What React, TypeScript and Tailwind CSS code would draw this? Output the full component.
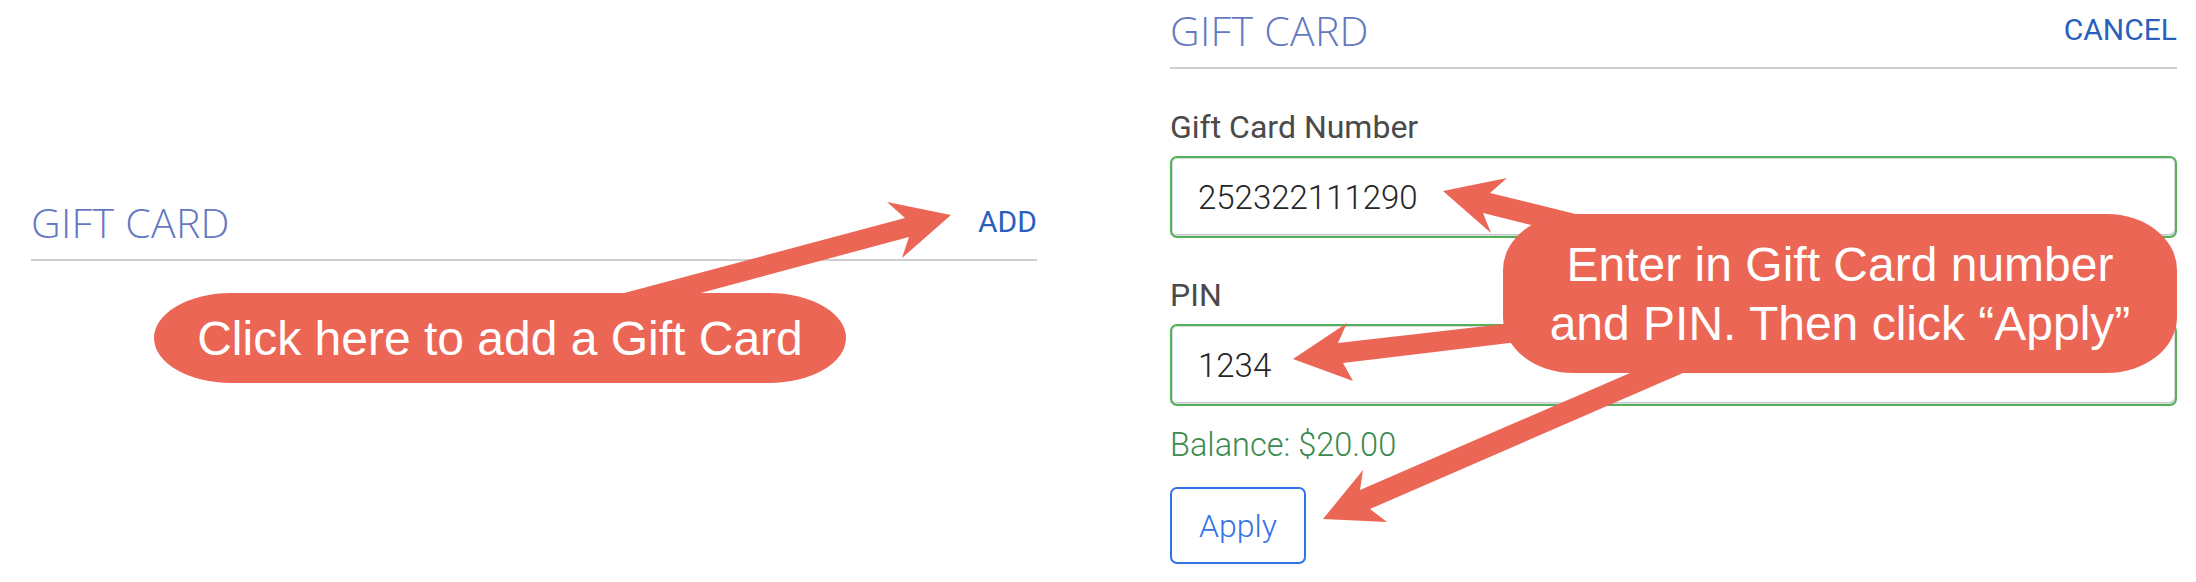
import type { ReactNode } from "react";

// annotation arrows, drawn over the form in page coordinates
const arrows = [
  "523,320 905,218 887,202 951,215 902,258 909,237 600,320",
  "1443,191 1507,178 1490,193 1620,225 1620,247 1483,213 1491,233",
  "1293,359 1347,323 1338,343 1600,313 1600,332 1343,363 1353,381",
  "1323,519 1363,470 1360,490 1683,350 1736,350 1370,509 1387,522",
];

export default function App() {
  return (
    <div className="relative h-[582px] w-[2196px] overflow-hidden bg-white font-[Roboto,sans-serif]">
      <div className="flex items-start">
        <section className="ml-[31px] w-[1006px] pt-[198px]">
          <SectionHeader action="ADD" />
        </section>

        <section className="ml-[133px] w-[1007px] pt-[6px]">
          <SectionHeader action="CANCEL" />

          <div className="mt-[38px] flex flex-col">
            <Field label="Gift Card Number" value="252322111290" />
            <div className="mt-[37px]">
              <Field label="PIN" value="1234" />
            </div>

            <div className="mt-[19px] text-[32.5px] leading-[40px] font-light text-[#3b8a4e]">Balance: $20.00</div>

            <button
              type="button"
              className="mt-[22px] flex h-[77px] w-[136px] items-center justify-center rounded-[7px] border-2 border-[#3174e6] text-[32px] leading-[40px] font-light text-[#3572e6]"
            >
              Apply
            </button>
          </div>
        </section>
      </div>

      <svg className="pointer-events-none absolute inset-0" width="2196" height="582" viewBox="0 0 2196 582">
        <g fill="#ec6656">
          {arrows.map((points) => (
            <polygon key={points} points={points} />
          ))}
        </g>
      </svg>

      <Callout className="left-[154px] top-[293px] h-[90px] w-[692px] rounded-[77px/45px]">
        Click here to add a Gift Card
      </Callout>
      <Callout className="left-[1503px] top-[214px] h-[159px] w-[674px] rounded-[70px/56px]">
        <span>Enter in Gift Card number</span>
        <span>and PIN. Then click “Apply”</span>
      </Callout>
    </div>
  );
}

function SectionHeader({ action }: { action: string }) {
  return (
    <div className="flex items-center justify-between border-b-2 border-[#cfcfcf] pb-[13px]">
      <h2 className="font-['Open_Sans',sans-serif] text-[41px] leading-[48px] tracking-[0.3px] font-light text-[#6479c0]">
        GIFT CARD
      </h2>
      <button type="button" className="text-[30px] leading-[36px] text-[#2c5fbd]">
        {action}
      </button>
    </div>
  );
}

function Field({ label, value }: { label: string; value: string }) {
  return (
    <label className="flex flex-col">
      <span className="mb-[9px] text-[32px] leading-[40px] text-[#4a4a4a]">{label}</span>
      <input
        readOnly
        value={value}
        className="h-[82px] w-full rounded-[7px] border-2 border-[#55b05a] pl-[26px] text-[33px] font-light text-[#262626] shadow-[inset_0_0_0_1px_#d8dbdf,inset_-1px_-2px_0_#c8cbd0] outline-none"
      />
    </label>
  );
}

function Callout({ className, children }: { className: string; children: ReactNode }) {
  return (
    <div
      className={`absolute flex flex-col items-center justify-center bg-[#ec6656] font-['Liberation_Sans',Arial,sans-serif] text-[48px] leading-[59px] text-white ${className}`}
    >
      {children}
    </div>
  );
}
